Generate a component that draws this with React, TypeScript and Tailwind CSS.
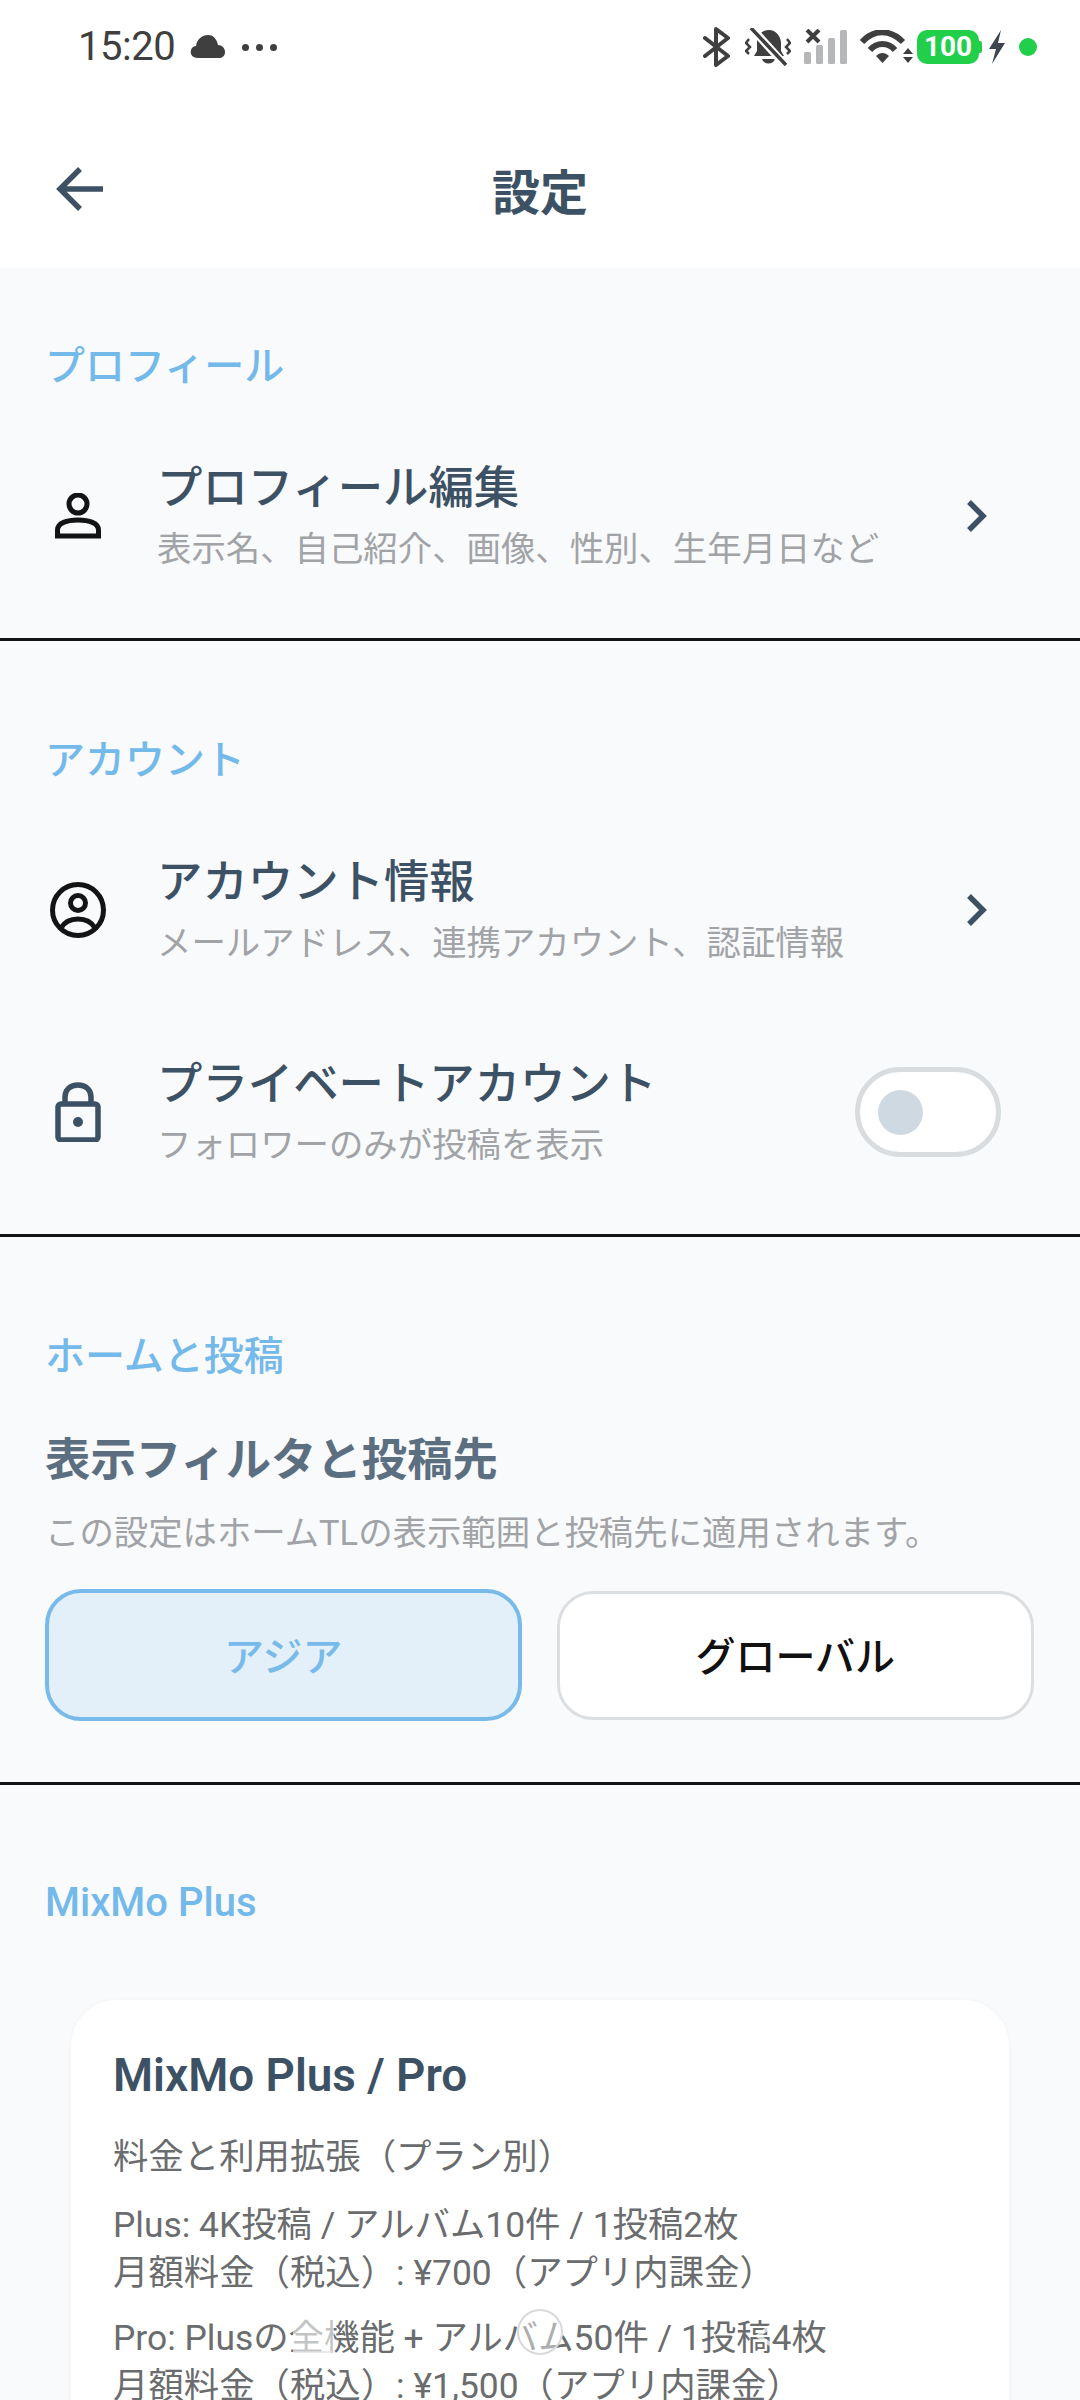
const Chevron = () => (
  <svg width="24" height="36" viewBox="0 0 24 36" fill="none" className="shrink-0">
    <path d="M4 4 L18 18 L4 32" stroke="#3d5165" strokeWidth="5.5" />
  </svg>
);

const IconBox = ({ children }: { children: React.ReactNode }) => (
  <div className="ml-[1px] mb-[6px] w-[64px] h-[64px] shrink-0 flex items-center justify-center">{children}</div>
);

const Section = ({ title, children, first, last }: { title: string; children: React.ReactNode; first?: boolean; last?: boolean }) => (
  <section className={`pl-[45px] pr-[46px] ${first ? "pt-[76px]" : last ? "pt-[95px]" : "pt-[97px]"} ${last ? "" : "border-b-[3px] border-[#141414]"}`}>
    <h2 className="text-[40px] leading-[46px] font-medium text-[#73b9ea]">{title}</h2>
    {children}
  </section>
);

const RowText = ({ title, sub }: { title: string; sub: string }) => (
  <div className="ml-[47px] flex-1 min-w-0">
    <div className="text-[45.4px] leading-[60px] font-medium text-[#3d5165]">{title}</div>
    <div className="text-[34.4px] leading-[60px] text-[#a1a3a6]">{sub}</div>
  </div>
);

export default function App() {
  return (
    <div className="relative w-[1080px] h-[2400px] overflow-hidden bg-[#f9fafc] font-['Roboto','Noto_Sans_CJK_JP',sans-serif]">
      <header className="h-[268px] bg-white">
        <div className="h-[94px] pl-[78px] pr-[43px] flex items-center">
          <span className="text-[40px] leading-[44px] text-[#3f3f3f] tracking-[-0.5px]">15:20</span>
          <svg width="36" height="26" viewBox="0 0 36 26" className="ml-[15px]">
            <path d="M8 24 C2 24 0 20 1 16 C2 13 4 12 6 12 C7 5 12 1 18 1 C24 1 27 6 28 11 C32 11 35 14 35 18 C35 22 32 24 29 24 Z" fill="#3f3f3f" />
          </svg>
          <div className="ml-[16px] flex gap-[7px]">
            <span className="w-[7px] h-[7px] rounded-full bg-[#3f3f3f]" />
            <span className="w-[7px] h-[7px] rounded-full bg-[#3f3f3f]" />
            <span className="w-[7px] h-[7px] rounded-full bg-[#3f3f3f]" />
          </div>
          <div className="ml-auto flex items-center">
            <svg width="28" height="40" viewBox="0 0 28 40" fill="none">
              <path d="M2 11 L25 29 L13 38 V2 L25 11 L2 29" stroke="#3f3f3f" strokeWidth="4" strokeLinejoin="round" strokeLinecap="round" />
            </svg>
            <svg width="46" height="38" viewBox="0 0 46 38" className="ml-[14px]" fill="none">
              <path d="M9 28 L12 23 V15 C12 7 17 2 24 2 C31 2 35 8 36 14 V23 L39 28 Z" fill="#3f3f3f" />
              <path d="M17 31 H30 C28 37 19 37 17 31 Z" fill="#3f3f3f" />
              <path d="M4 -3 L40 37" stroke="white" strokeWidth="8" />
              <path d="M6 0 L41 37" stroke="#3f3f3f" strokeWidth="3.5" />
              <path d="M4 11 L1 15 L5 19 L1 23 L4 26 M42 11 L45 15 L41 19 L45 23 L42 26" stroke="#3f3f3f" strokeWidth="2.5" />
            </svg>
            <svg width="44" height="36" viewBox="0 0 44 36" className="ml-[13px]">
              <rect x="0" y="23" width="7" height="12" rx="1.5" fill="#b5b7b9" />
              <rect x="12" y="16" width="7" height="19" rx="1.5" fill="#b5b7b9" />
              <rect x="24" y="9" width="7" height="26" rx="1.5" fill="#b5b7b9" />
              <rect x="36" y="1" width="7" height="34" rx="1.5" fill="#b5b7b9" />
              <path d="M3 1 L15 13 M15 1 L3 13" stroke="#3f3f3f" strokeWidth="4" />
            </svg>
            <svg width="58" height="34" viewBox="0 0 58 34" className="ml-[11px]" fill="none">
              <path d="M3 12 C15 -1 31 -1 44 12" stroke="#3f3f3f" strokeWidth="6" />
              <path d="M11 20 C18 12 29 12 36 20" stroke="#3f3f3f" strokeWidth="6" />
              <path d="M17 26 C21 22 26 22 30 26 L23.5 33 Z" fill="#3f3f3f" />
              <path d="M49 18 L54 24 H44 Z M44 27 H54 L49 33 Z" fill="#3f3f3f" />
            </svg>
            <div className="flex items-center">
              <div className="w-[62px] h-[34px] rounded-[10px] bg-[#22cf4a] flex items-center justify-center text-[28px] leading-[34px] font-bold text-white">100</div>
              <div className="w-[3px] h-[12px] bg-[#22cf4a] rounded-r-[2px]" />
            </div>
            <svg width="18" height="34" viewBox="0 0 18 34" className="ml-[6px]">
              <path d="M13 0 L1 19 H8 L4 34 L17 13 H10 Z" fill="#3d4650" />
            </svg>
            <span className="ml-[13px] w-[18px] h-[18px] rounded-full bg-[#22cf4a]" />
          </div>
        </div>
        <div className="relative h-[174px] flex items-center justify-center pt-[26px]">
          <svg width="48" height="44" viewBox="0 0 48 44" fill="none" className="absolute left-[56px] top-[73px]">
            <path d="M24 2 L4 22 L24 42 M4 22 H47" stroke="#3d5165" strokeWidth="5.5" />
          </svg>
          <h1 className="text-[48px] leading-[60px] font-bold text-[#3d5165]">設定</h1>
        </div>
      </header>

      <Section title="プロフィール" first>
        <div className="mt-[69px] pb-[59px] flex items-center">
          <IconBox>
            <svg width="46" height="46" viewBox="0 0 46 46" fill="none">
              <circle cx="23" cy="11" r="9" stroke="#141414" strokeWidth="5" />
              <path d="M2.5 43 V37 C2.5 30 12 27 23 27 C34 27 43.5 30 43.5 37 V43 Z" stroke="#141414" strokeWidth="5" />
            </svg>
          </IconBox>
          <RowText title="プロフィール編集" sub="表示名、自己紹介、画像、性別、生年月日など" />
          <div className="mr-[45px] mb-[6px]"><Chevron /></div>
        </div>
      </Section>

      <Section title="アカウント">
        <div className="mt-[69px] flex items-center">
          <IconBox>
            <svg width="56" height="56" viewBox="0 0 56 56" fill="none">
              <circle cx="28" cy="28" r="25.5" stroke="#141414" strokeWidth="5" />
              <circle cx="28" cy="21" r="7.5" stroke="#141414" strokeWidth="5" />
              <path d="M11 46 C15 39 21 37 28 37 C35 37 41 39 45 46" stroke="#141414" strokeWidth="5" />
            </svg>
          </IconBox>
          <RowText title="アカウント情報" sub="メールアドレス、連携アカウント、認証情報" />
          <div className="mr-[45px] mb-[6px]"><Chevron /></div>
        </div>
        <div className="mt-[82px] pb-[59px] flex items-center">
          <IconBox>
            <svg width="46" height="60" viewBox="0 0 46 60" fill="none">
              <path d="M10 21 V15 C10 8 15 3 23 3 C31 3 36 8 36 15 V21" stroke="#3d5165" strokeWidth="5.5" />
              <rect x="3" y="22" width="40" height="36" rx="3" stroke="#3d5165" strokeWidth="5.5" />
              <circle cx="23" cy="40" r="5" fill="#3d5165" />
            </svg>
          </IconBox>
          <RowText title="プライベートアカウント" sub="フォロワーのみが投稿を表示" />
          <div className="w-[146px] h-[90px] mr-[33px] mb-[6px] shrink-0 rounded-full bg-white border-[5px] border-[#d9dde0] flex items-center pl-[18px]">
            <span className="w-[45px] h-[45px] rounded-full bg-[#cfd9e2]" />
          </div>
        </div>
      </Section>

      <Section title="ホームと投稿">
        <h3 className="mt-[51px] text-[45.4px] leading-[60px] font-bold text-[#5c6f81]">表示フィルタと投稿先</h3>
        <p className="mt-[17px] text-[34.4px] leading-[50px] text-[#a1a3a6]">この設定はホームTLの表示範囲と投稿先に適用されます。</p>
        <div className="mt-[31px] pb-[61px] flex gap-[35px] items-center">
          <button className="w-[477px] h-[132px] rounded-[36px] border-[4px] border-[#78bbea] bg-[#e3f0f9] pt-[6px] text-[40px] font-medium text-[#78bbea]">アジア</button>
          <button className="w-[478px] h-[129px] rounded-[36px] border-[3px] border-[#dcdfe1] bg-white pt-[6px] text-[40px] font-medium text-[#111111]">グローバル</button>
        </div>
      </Section>

      <Section title="MixMo Plus" last>
        <div className="mt-[72px] ml-[24px] w-[942px] rounded-[48px] border-[2px] border-[#f6f7f9] bg-white px-[42px] pt-[46px] pb-[40px] text-[35.4px] leading-[48px] text-[#6a6c6e]">
          <h3 className="text-[45.8px] leading-[60px] font-semibold text-[#3d5165]">MixMo Plus / Pro</h3>
          <p className="mt-[27px]">料金と利用拡張（プラン別）</p>
          <p className="mt-[20px]">Plus: 4K投稿 / アルバム10件 / 1投稿2枚<br />月額料金（税込）: ¥700（アプリ内課金）</p>
          <p className="mt-[17px]">Pro: Plusの全機能 + アルバム50件 / 1投稿4枚<br />月額料金（税込）: ¥1,500（アプリ内課金）</p>
        </div>
      </Section>

      <div className="absolute left-[293px] top-[2316px] w-[41px] h-[37px] bg-white/60 border-b-[2px] border-[#e2e3e5]/70" />
      <div className="absolute left-[517px] top-[2309px] w-[46px] h-[46px] rounded-full border-[2px] border-[#d8d9db] bg-white/45" />
      <svg width="36" height="44" viewBox="0 0 36 44" fill="none" className="absolute left-[752px] top-[2312px]">
        <path d="M33 3 L6 24 L33 42" stroke="#ffffff" strokeOpacity="0.7" strokeWidth="4" />
      </svg>
    </div>
  );
}
